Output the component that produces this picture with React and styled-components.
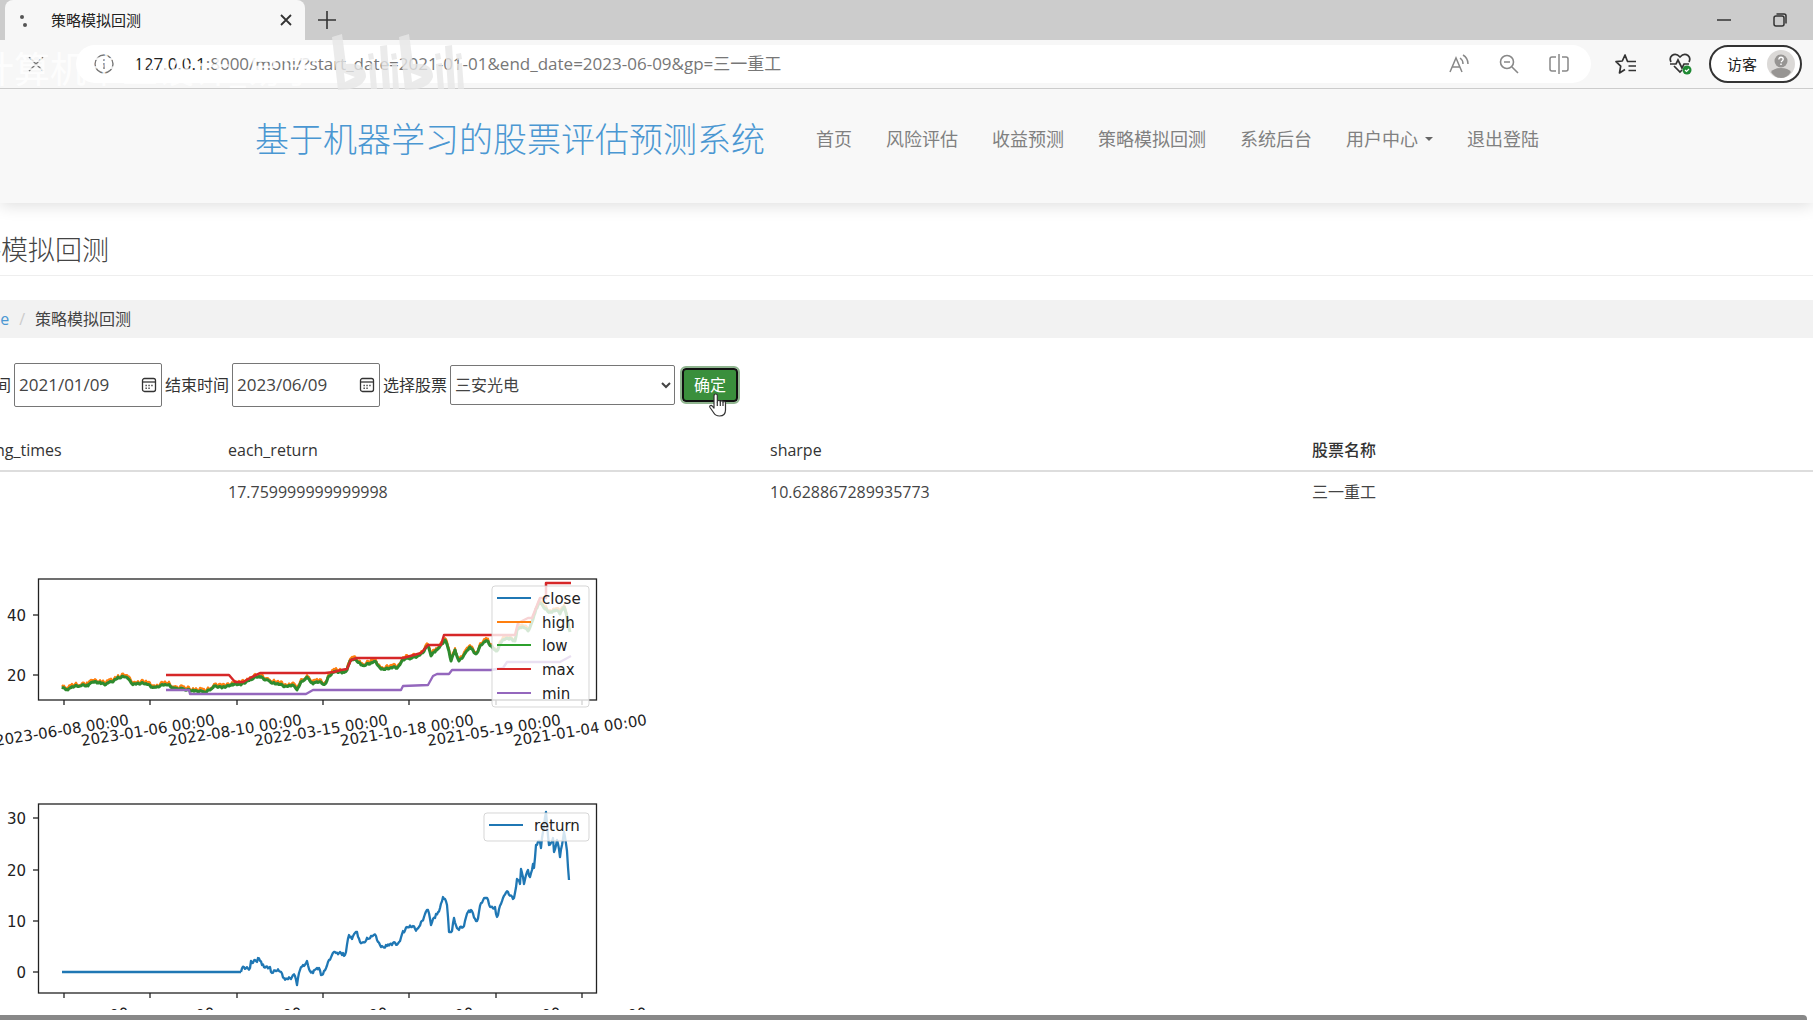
import React from 'react'
import styled, { createGlobalStyle } from 'styled-components'

const GlobalStyle = createGlobalStyle`
    * {
        box-sizing: border-box;
    }

    body {
        margin: 0;
        background: #fff;
        color: #444;
        font-family: "Open Sans", "Noto Sans CJK SC", sans-serif;
        font-size: 16px;
        line-height: 24px;
    }

    button, input, select {
        font: inherit;
        color: inherit;
    }
`

const Window = styled.div`
    display: flex;
    flex-direction: column;
    height: 100vh;
    overflow: hidden;
`

const IconButton = styled.button`
    display: flex;
    align-items: center;
    justify-content: center;
    width: ${props => props.$width || 24}px;
    height: 24px;
    padding: 0;
    border: 0;
    background: none;
    color: ${props => props.$color || '#333'};

    svg {
        display: block;
    }
`

/* browser frame */

const TabStrip = styled.div`
    display: flex;
    align-items: center;
    flex: none;
    height: 40px;
    padding: 0 21px 0 5px;
    background: #ccc;
`

const Tab = styled.div`
    display: flex;
    align-items: center;
    width: 300px;
    height: 40px;
    margin-right: 10px;
    padding: 0 7px 0 12px;
    border-radius: 8px 8px 0 0;
    background: #f7f7f7;
    color: #222;
    font-size: 15px;

    .name {
        flex: 1;
        padding-left: 22px;
    }
`

const WindowButtons = styled.div`
    display: flex;
    gap: 32px;
    margin-left: auto;
`

const Toolbar = styled.div`
    position: relative;
    display: flex;
    align-items: center;
    flex: none;
    height: 49px;
    padding: 0 11px 0 24px;
    border-bottom: 1px solid #ccc;
    background: #f7f7f7;
`

const AddressBar = styled.div`
    display: flex;
    align-items: center;
    flex: 1;
    height: 38px;
    margin: 0 24px 0 28px;
    padding: 0 20px 0 16px;
    border-radius: 19px;
    background: #fff;

    .url {
        flex: 1;
        padding-left: 18px;
        color: #777;
        font-size: 17px;
        white-space: nowrap;
    }

    .host {
        color: #222;
    }

    .tools {
        display: flex;
        gap: 26px;
    }
`

const Profile = styled.button`
    display: flex;
    align-items: center;
    gap: 10px;
    height: 38px;
    margin-left: 16px;
    padding: 0 5px 0 16px;
    border: 2px solid #333;
    border-radius: 19px;
    background: #fff;
    color: #222;
    font-size: 15px;
`

const Watermark = styled.div`
    position: absolute;
    left: -22px;
    top: -6px;
    display: flex;
    align-items: flex-start;
    color: rgba(255, 255, 255, .85);
    font-size: 36px;
    line-height: 72px;
    white-space: nowrap;
    pointer-events: none;

    svg {
        margin-left: 14px;
    }
`

/* site */

const SiteHeader = styled.header`
    display: flex;
    align-items: flex-start;
    flex: none;
    gap: 51px;
    height: 114px;
    padding: 26px 0 0 255px;
    background: #f8f8f8;
    box-shadow: 0 2px 16px rgba(0, 0, 0, .14);
    white-space: nowrap;
`

const Brand = styled.a`
    color: #4a97d2;
    font-size: 34px;
    font-weight: 300;
    line-height: 48px;
    text-decoration: none;
`

const Nav = styled.nav`
    display: flex;
    gap: 34px;
    font-size: 18px;
    line-height: 48px;

    a {
        display: flex;
        align-items: center;
        gap: 7px;
        color: #808080;
        text-decoration: none;
    }
`

const Caret = styled.span`
    border: 4px solid transparent;
    border-top-color: #666;
    border-bottom: 0;
`

const Content = styled.main`
    flex: 1;
    min-height: 0;
    margin-left: -53px;
    overflow: hidden;
`

const PageTitle = styled.h1`
    margin: 0 0 24px;
    padding: 27px 0 5px;
    border-bottom: 1px solid #eee;
    font-size: 27px;
    font-weight: 300;
    line-height: 40px;
`

const Breadcrumb = styled.nav`
    display: flex;
    height: 38px;
    padding: 0 17px;
    background: #f2f2f2;
    line-height: 38px;

    a {
        color: #4a97d2;
        text-decoration: none;
    }

    .slash {
        padding: 0 10px;
        color: #ccc;
    }
`

const FilterForm = styled.form`
    display: flex;
    align-items: center;
    gap: 3px;
    padding: 25px 0 22px;
    white-space: nowrap;

    label {
        color: #333;
    }

    select {
        width: 225px;
        height: 40px;
        border: 1px solid #767676;
        border-radius: 2px;
        background: #fff;
    }
`

const DateField = styled.span`
    display: flex;
    align-items: center;
    width: 148px;
    height: 44px;
    padding: 0 0 0 4px;
    border: 1px solid #767676;
    border-radius: 2px;

    input {
        flex: 1;
        min-width: 0;
        padding: 0;
        border: 0;
        outline: 0;
        font-size: 17px;
    }
`

const Submit = styled.button`
    position: relative;
    width: 56px;
    height: 34px;
    margin-left: 4px;
    padding: 0;
    border: 2px solid #111;
    border-radius: 4px;
    outline: 2px solid #8fb58f;
    background: #3a8f3c;
    color: #fff;

    svg {
        position: absolute;
        left: 23px;
        top: 23px;
    }
`

const ResultTable = styled.table`
    width: 2000px;
    border-collapse: collapse;
    table-layout: fixed;

    th, td {
        height: 42px;
        padding: 0 8px;
        text-align: left;
    }

    td {
        height: 40px;
    }

    th {
        border-bottom: 2px solid #ddd;
        color: #333;
        font-weight: 500;
    }

    .first {
        width: 273px;
        padding-left: 13px;
    }

    .col {
        width: 542px;
    }
`

const Charts = styled.div`
    display: flex;
    flex-direction: column;
    padding-top: 49px;

    svg {
        display: block;
        flex: none;
        font-family: "DejaVu Sans", sans-serif;
        font-size: 15px;
    }
`

const ScrollTrack = styled.div`
    flex: none;
    height: 10px;
    padding-top: 5px;
    background: #fff;

    div {
        height: 5px;
        margin-right: 6px;
        border-radius: 0 4px 0 0;
        background: #888;
    }
`

const DATES = [
    '2023-06-08 00:00',
    '2023-01-06 00:00',
    '2022-08-10 00:00',
    '2022-03-15 00:00',
    '2021-10-18 00:00',
    '2021-05-19 00:00',
    '2021-01-04 00:00',
]

const CLOSE = [
    [62, 687], [68, 690], [75, 686], [82, 685], [88, 686], [93, 682], [100, 682], [105, 685], [112, 682],
    [118, 677], [126, 677], [132, 684], [138, 683], [145, 684], [152, 687], [160, 686], [168, 685], [175, 688],
    [185, 690], [193, 690], [205, 693], [214, 686], [222, 688], [232, 684], [241, 685], [250, 679], [258, 677],
    [268, 680], [275, 684], [285, 686], [292, 685], [297, 690], [302, 681], [307, 677], [313, 684], [319, 682],
    [325, 684], [329, 676], [335, 672], [343, 672], [347, 670], [350, 661], [356, 660], [362, 665], [370, 664],
    [376, 662], [380, 668], [388, 669], [398, 667], [403, 659], [410, 659], [415, 657], [422, 653], [428, 646],
    [431, 656], [436, 650], [442, 644], [445, 640], [448, 648], [451, 661], [455, 650], [459, 661], [463, 657],
    [468, 650], [470, 647], [476, 654], [481, 645], [487, 641], [491, 646], [497, 651], [502, 641], [510, 638],
    [515, 641], [517, 630], [523, 627], [528, 631], [532, 622], [536, 609], [540, 603], [545, 609], [550, 612],
    [556, 610], [560, 614], [564, 607], [567, 617], [570, 632],
]

const MAX = [
    [166, 675], [229, 675], [235, 682], [243, 682], [250, 678], [260, 673], [325, 673], [334, 672], [341, 670],
    [347, 669], [351, 660], [357, 658], [403, 658], [421, 653], [428, 645], [441, 645], [444, 635], [515, 635],
    [518, 623], [528, 618], [532, 618], [540, 598], [546, 598], [546, 583], [571, 583],
]

const MIN = [
    [166, 690], [189, 690], [190, 694], [306, 694], [313, 690], [401, 690], [403, 686], [428, 685], [433, 676],
    [437, 674], [449, 674], [452, 670], [491, 670], [503, 668], [507, 662], [560, 662], [571, 656],
]

const FLAT = [[62, 972], [241, 972]]

const RETURN = [
    [241, 972], [244, 967], [250, 968], [251, 961], [257, 962], [258, 958], [262, 965], [270, 967], [272, 973],
    [279, 971], [284, 978], [292, 977], [295, 976], [297, 985], [299, 973], [303, 965], [307, 961], [309, 969],
    [313, 973], [319, 968], [321, 975], [324, 971], [328, 962], [332, 955], [336, 953], [343, 953], [345, 955],
    [349, 935], [352, 939], [357, 932], [360, 942], [368, 939], [376, 936], [380, 945], [387, 946], [392, 945],
    [399, 942], [403, 931], [411, 927], [417, 929], [424, 917], [428, 910], [431, 925], [436, 914], [440, 908],
    [443, 897], [447, 905], [449, 932], [452, 931], [454, 918], [458, 929], [464, 926], [468, 912], [471, 910],
    [477, 921], [481, 903], [486, 898], [491, 907], [495, 907], [497, 917], [503, 898], [508, 892], [514, 898],
    [517, 879], [520, 884], [521, 869], [524, 884], [528, 870], [530, 877], [533, 864], [534, 868], [536, 845],
    [540, 842], [541, 848], [543, 832], [546, 812], [549, 845], [553, 838], [554, 852], [557, 840], [560, 857],
    [562, 845], [564, 832], [567, 851], [569, 880],
]

const toPoints = list => list.map(p => p.join(',')).join(' ')

// fills in the daily wobble between the main turning points
const wobble = (list, size, shift = 0) => {
    const out = []
    list.forEach(([x, y], i) => {
        out.push([x, y + shift])
        const next = list[i + 1]
        if (!next) return
        for (let px = x + 1; px < next[0]; px += 1) {
            const part = (px - x) / (next[0] - x)
            const noise = Math.sin(px * 12.9 + Math.cos(px * 5)) * size
            out.push([px, +(y + (next[1] - y) * part + noise + shift).toFixed(1)])
        }
    })
    return toPoints(out)
}

const Axes = ({ top, bottom, ticks }) => (
    <g>
        <g fill="none" stroke="#222">
            <rect x="38.5" y={top} width="558" height={bottom - top} strokeWidth="1.3" />
            {ticks.map(([label, y]) => <path key={label} d={`M33 ${y}h5`} strokeWidth="1.3" />)}
            {DATES.map((date, i) => (
                <path key={date} d={`M${64 + Math.round(i * 86.3)} ${bottom}v5`} strokeWidth="1.3" />
            ))}
        </g>
        <g fill="#222">
            {ticks.map(([label, y]) => (
                <text key={label} x="26" y={y + 6} textAnchor="end">{label}</text>
            ))}
            {DATES.map((date, i) => {
                const x = Math.round(i * 86.3) - 4
                const y = bottom + 46
                return <text key={date} x={x} y={y} transform={`rotate(-9 ${x} ${y})`}>{date}</text>
            })}
        </g>
    </g>
)

const Legend = ({ x, y, height, items }) => (
    <g>
        <rect x={x} y={y} width={589 - x} height={height} rx="3" fill="#fff" fillOpacity=".8" stroke="#ccc" strokeOpacity=".8" />
        {items.map(([name, color], i) => (
            <g key={name}>
                <path d={`M${x + 5} ${y + 12 + Math.round(i * 23.7)}h34`} stroke={color} strokeWidth="2" />
                <text x={x + 50} y={y + 18 + Math.round(i * 23.7)} fill="#222">{name}</text>
            </g>
        ))}
    </g>
)

const PriceChart = () => (
    <svg width="720" height="220" viewBox="-53 560 720 220" role="img" aria-label="price">
        <g fill="none" strokeWidth="2" strokeLinejoin="round">
            <polyline points={wobble(CLOSE, 1, -1)} stroke="#1f77b4" />
            <polyline points={wobble(CLOSE, 2, -2)} stroke="#ff7f0e" />
            <polyline points={wobble(CLOSE, 1)} stroke="#2e8b2e" strokeWidth="3" />
            <polyline points={toPoints(MAX)} stroke="#d62728" strokeWidth="2.5" />
            <polyline points={toPoints(MIN)} stroke="#9467bd" strokeWidth="2.3" />
        </g>
        <Axes top={579} bottom={700} ticks={[['40', 615], ['20', 675]]} />
        <Legend
            x={492}
            y={586}
            height={121}
            items={[
                ['close', '#1f77b4'],
                ['high', '#ff7f0e'],
                ['low', '#2ca02c'],
                ['max', '#d62728'],
                ['min', '#9467bd'],
            ]}
        />
    </svg>
)

const ReturnChart = () => (
    <svg width="720" height="280" viewBox="-53 780 720 280" role="img" aria-label="return">
        <g fill="none" stroke="#1f77b4" strokeWidth="2.3" strokeLinejoin="round">
            <polyline points={toPoints(FLAT)} />
            <polyline points={wobble(RETURN, 2)} />
        </g>
        <Axes top={804} bottom={993} ticks={[['30', 818], ['20', 870], ['10', 921], ['0', 972]]} />
        <Legend x={484} y={813} height={28} items={[['return', '#1f77b4']]} />
    </svg>
)

const CalendarIcon = () => (
    <svg width="16" height="16" viewBox="0 0 16 16" fill="none" stroke="#333" strokeWidth="1.3">
        <rect x="1.5" y="1.5" width="13" height="13" rx="2" />
        <path d="M1.5 5h13" />
        <path d="M4.5 8.5h1.3M7.4 8.5h1.3M10.3 8.5h1.3M4.5 11.3h1.3M7.4 11.3h1.3" strokeWidth="1.6" />
    </svg>
)

const HandCursor = () => (
    <svg width="22" height="25" viewBox="0 0 22 25" fill="#fff" stroke="#333" strokeWidth="1.2" strokeLinejoin="round">
        <path d="M7 15V3q0-2 1.700-2t1.600 2v6q0-1.500 1.500-1.500T13.300 9q0-1.200 1.400-1.200T16 9.500q0-1 1.200-1T18.500 10v7q0 6-6 6-4 0-6-3.500L3 14.500q-.8-1.500.5-2 1-.4 2 .8z" />
        <path d="M10.300 9v4M13.300 9v4M16 9.500V13" />
    </svg>
)

const BilibiliLogo = () => (
    <svg width="132" height="58" viewBox="0 0 132 58" fill="#e6e6e6" fillOpacity=".8">
        <path d="M0 3l10-3 4 30q20-2 20 13Q30 56 6 56zM12 39l1 9 10-5z" fillRule="evenodd" />
        <path d="M37 30l6-1 2 26h-6zM36 20l5-1 1 6-5 1zM48 12l7-1 3 44h-7zM60 30l5-1 2 26h-6zM59 20l5-1 1 6-5 1z" />
        <path d="M67 3l10-3 4 30q20-2 20 13Q97 56 73 56zM79 39l1 9 10-5z" fillRule="evenodd" />
        <path d="M104 30l6-1 2 26h-6zM103 20l5-1 1 6-5 1zM113 12l7-1 3 44h-7zM125 30l5-1 2 26h-6zM124 20l5-1 1 6-5 1z" />
    </svg>
)

const BrowserFrame = () => (
    <>
        <TabStrip>
            <Tab>
                <svg width="12" height="16" viewBox="0 0 12 16" fill="#555">
                    <circle cx="5" cy="5" r="2" />
                    <circle cx="8" cy="13" r="2" />
                </svg>
                <span className="name">策略模拟回测</span>
                <IconButton aria-label="关闭标签页">
                    <svg width="12" height="12" viewBox="0 0 12 12" stroke="currentColor" strokeWidth="1.8">
                        <path d="M1 1l10 10M11 1L1 11" />
                    </svg>
                </IconButton>
            </Tab>
            <IconButton aria-label="新建标签页">
                <svg width="18" height="18" viewBox="0 0 18 18" stroke="currentColor" strokeWidth="1.6">
                    <path d="M9 0v18M0 9h18" />
                </svg>
            </IconButton>
            <WindowButtons>
                <IconButton aria-label="最小化">
                    <svg width="14" height="14" viewBox="0 0 14 14" stroke="currentColor" strokeWidth="1.5">
                        <path d="M0 7h14" />
                    </svg>
                </IconButton>
                <IconButton aria-label="还原">
                    <svg width="14" height="14" viewBox="0 0 14 14" fill="none" stroke="currentColor" strokeWidth="1.5">
                        <rect x="1" y="3" width="10" height="10" rx="2" />
                        <path d="M3.500 1H11q2 0 2 2v7.500" />
                    </svg>
                </IconButton>
            </WindowButtons>
        </TabStrip>
        <Toolbar>
            <IconButton aria-label="停止" $color="#777">
                <svg width="16" height="16" viewBox="0 0 16 16" stroke="currentColor" strokeWidth="1.4">
                    <path d="M1 1l14 14M15 1L1 15" />
                </svg>
            </IconButton>
            <AddressBar>
                <IconButton aria-label="网站信息" $color="#777">
                    <svg width="20" height="20" viewBox="0 0 20 20" fill="none" stroke="currentColor" strokeWidth="1.4">
                        <circle cx="10" cy="10" r="9" />
                        <path d="M10 9v6M10 5v2" />
                    </svg>
                </IconButton>
                <div className="url">
                    <span className="host">127.0.0.1</span>:8000/moni/?start_date=2021-01-01&amp;end_date=2023-06-09&amp;gp=三一重工
                </div>
                <div className="tools">
                    <IconButton aria-label="朗读" $color="#888">
                        <svg width="20" height="20" viewBox="0 0 20 20" fill="none" stroke="currentColor" strokeWidth="1.5">
                            <path d="M1 18L7 4l6 14M3 13h8M11 4q3 2 3 6M14 1q5 3 5 9" />
                        </svg>
                    </IconButton>
                    <IconButton aria-label="缩小" $color="#888">
                        <svg width="20" height="20" viewBox="0 0 20 20" fill="none" stroke="currentColor" strokeWidth="1.6">
                            <circle cx="8" cy="8" r="6.500" />
                            <path d="M5 8h6M13 13l6 6" />
                        </svg>
                    </IconButton>
                    <IconButton aria-label="分屏" $color="#888">
                        <svg width="20" height="20" viewBox="0 0 20 20" fill="none" stroke="currentColor" strokeWidth="1.5">
                            <path d="M7 3H3Q1 3 1 5v10q0 2 2 2h4M13 3h4q2 0 2 2v10q0 2-2 2h-4M10 0v20" />
                        </svg>
                    </IconButton>
                </div>
            </AddressBar>
            <IconButton aria-label="收藏夹" $width={22}>
                <svg width="22" height="20" viewBox="0 0 22 20" fill="none" stroke="currentColor" strokeWidth="1.7" strokeLinejoin="round">
                    <path d="M12.500 7.500L10 1 7.300 7 1 7.700l4.700 4.500L4.500 19l5.500-3.500" />
                    <path d="M12 7.500h9M13.500 12H21M13.500 16.500H21" />
                </svg>
            </IconButton>
            <IconButton aria-label="浏览器概要" $width={56}>
                <svg width="56" height="22" viewBox="-32 0 56 22" fill="none" stroke="currentColor" strokeWidth="1.7">
                    <path d="M2 9Q0 5 3 2.500q4-3 8 1.500 4-4.500 8-1.500 3 2.500 1 6.500M5 13l6 6 2-2" />
                    <path d="M1 11h6l2-4 4 8 2-4h5" />
                    <circle cx="18" cy="17" r="4.500" fill="#1f8a34" stroke="none" />
                    <path d="M16 17l1.500 1.500L20 16" stroke="#fff" strokeWidth="1.200" />
                </svg>
            </IconButton>
            <Profile>
                访客
                <svg width="28" height="28" viewBox="0 0 28 28">
                    <circle cx="14" cy="14" r="14" fill="#dbd9d7" />
                    <circle cx="14" cy="11" r="6.500" fill="#979593" />
                    <path d="M4 22q3-4 10-4t10 4q-4 6-10 6T4 22" fill="#979593" />
                    <path d="M11.800 9.500q0-2.200 2.200-2.200t2.200 2q0 1.200-2.200 2.700M14 13.500V15" fill="none" stroke="#fff" strokeWidth="1.400" />
                </svg>
            </Profile>
            <Watermark aria-hidden="true">
                计算机毕业设计_易学
                <BilibiliLogo />
            </Watermark>
        </Toolbar>
    </>
)

const App = () => {
    return (
        <Window>
            <GlobalStyle />
            <BrowserFrame />
            <SiteHeader>
                <Brand href="#">基于机器学习的股票评估预测系统</Brand>
                <Nav>
                    <a href="#">首页</a>
                    <a href="#">风险评估</a>
                    <a href="#">收益预测</a>
                    <a href="#">策略模拟回测</a>
                    <a href="#">系统后台</a>
                    <a href="#">用户中心 <Caret /></a>
                    <a href="#">退出登陆</a>
                </Nav>
            </SiteHeader>
            <Content>
                <PageTitle>策略模拟回测</PageTitle>
                <Breadcrumb>
                    <a href="#">Home</a>
                    <span className="slash">/</span>
                    <span>策略模拟回测</span>
                </Breadcrumb>
                <FilterForm onSubmit={e => e.preventDefault()}>
                    <label htmlFor="start">开始时间</label>
                    <DateField>
                        <input id="start" defaultValue="2021/01/09" />
                        <IconButton type="button" aria-label="选择开始日期"><CalendarIcon /></IconButton>
                    </DateField>
                    <label htmlFor="end">结束时间</label>
                    <DateField>
                        <input id="end" defaultValue="2023/06/09" />
                        <IconButton type="button" aria-label="选择结束日期"><CalendarIcon /></IconButton>
                    </DateField>
                    <label htmlFor="stock">选择股票</label>
                    <select id="stock" defaultValue="三安光电">
                        <option>三安光电</option>
                        <option>三一重工</option>
                    </select>
                    <Submit type="submit">确定<HandCursor /></Submit>
                </FilterForm>
                <ResultTable>
                    <thead>
                        <tr>
                            <th className="first">trading_times</th>
                            <th className="col">each_return</th>
                            <th className="col">sharpe</th>
                            <th>股票名称</th>
                        </tr>
                    </thead>
                    <tbody>
                        <tr>
                            <td></td>
                            <td>17.759999999999998</td>
                            <td>10.628867289935773</td>
                            <td>三一重工</td>
                        </tr>
                    </tbody>
                </ResultTable>
                <Charts>
                    <PriceChart />
                    <ReturnChart />
                </Charts>
            </Content>
            <ScrollTrack><div /></ScrollTrack>
        </Window>
    )
}

export default App
